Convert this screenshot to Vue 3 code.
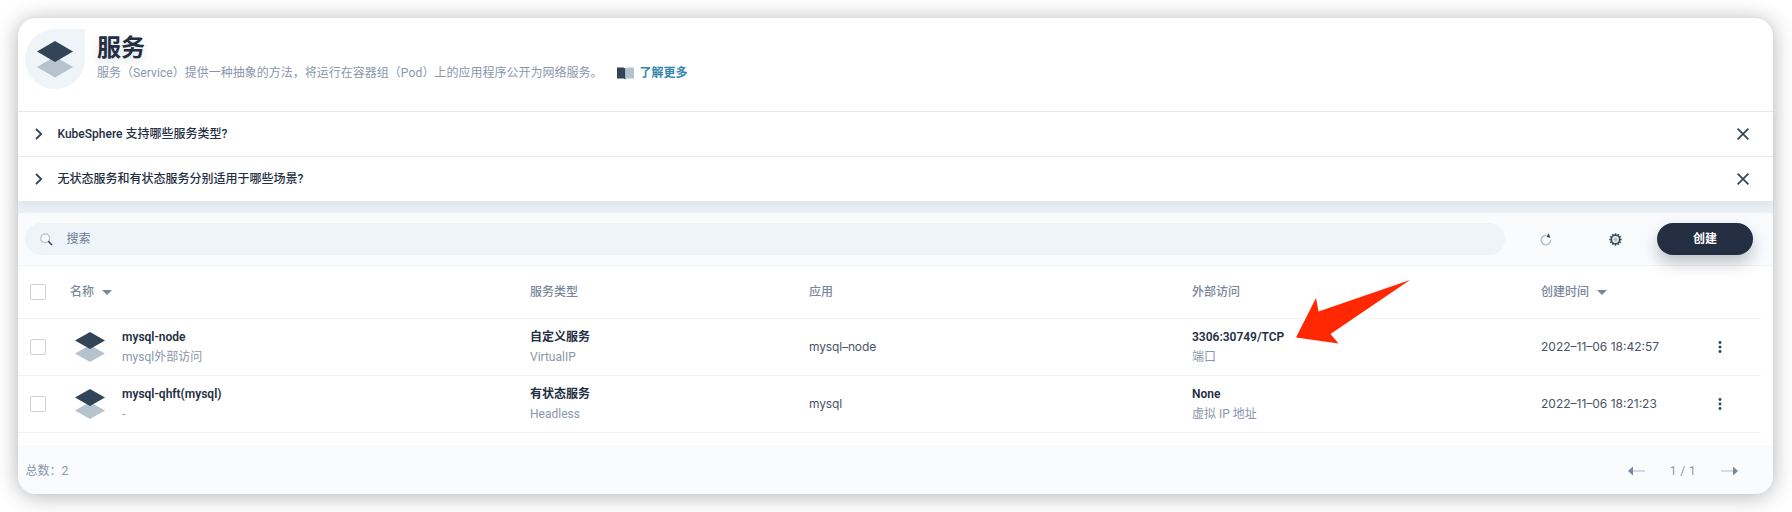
<script setup>
const tips = ['KubeSphere 支持哪些服务类型?', '无状态服务和有状态服务分别适用于哪些场景?']
const rows = [
  { name: 'mysql-node', note: 'mysql外部访问', type: '自定义服务', kind: 'VirtualIP', app: 'mysql–node', access: '3306:30749/TCP', accessNote: '端口', time: '2022–11–06 18:42:57' },
  { name: 'mysql-qhft(mysql)', note: '-', type: '有状态服务', kind: 'Headless', app: 'mysql', access: 'None', accessNote: '虚拟 IP 地址', time: '2022–11–06 18:21:23' },
]
const teeth = Array.from({ length: 12 }, (_, i) => i * 30)
</script>

<template>
  <main class="stage">
    <section class="window">
      <header class="banner">
        <div class="badge">
          <svg width="36" height="37" viewBox="0 0 36 37">
            <path d="M18 15.500L36 26L18 36.500L0 26Z" fill="#b6c2cd" />
            <path d="M18 0L36 10.500L18 21L0 10.500Z" fill="#324558" />
          </svg>
        </div>
        <div class="intro">
          <h1>服务</h1>
          <p>
            <span>服务（<span class="svc">Service</span>）提供一种抽象的方法，将运行在容器组（<span class="pod">Pod</span>）上的应用程序公开为网络服务。</span>
            <svg class="book" width="17" height="13" viewBox="0 0 17 13">
              <path d="M0 .5H6.500L8.500 1.500V12.500L6.500 11.500H0Z" fill="#324558" />
              <path d="M17 .5H10.500L8.500 1.500V12.500L10.500 11.500H17Z" fill="#b6c2cd" />
            </svg>
            <a>了解更多</a>
          </p>
        </div>
      </header>

      <div class="tips">
        <div v-for="tip in tips" :key="tip" class="tip">
          <svg width="8" height="12" viewBox="0 0 8 12"><path d="M1 1L6.200 6L1 11" fill="none" stroke="#324558" stroke-width="1.800" /></svg>
          <strong>{{ tip }}</strong>
          <svg width="12" height="12" viewBox="0 0 12 12"><path d="M.6 .6L11.400 11.400M11.400 .6L.6 11.400" stroke="#324558" stroke-width="1.700" /></svg>
        </div>
      </div>

      <div class="panel">
        <div class="toolbar">
          <div class="search">
            <svg width="13" height="13" viewBox="0 0 13 13">
              <circle cx="5.200" cy="5.200" r="4.400" fill="#f7f9fb" stroke="#b6c2cd" stroke-width="1.200" />
              <path d="M8.300 8.300L12 12" stroke="#324558" stroke-width="1.600" />
            </svg>
            <span>搜索</span>
          </div>
          <svg class="refresh" width="12" height="13" viewBox="0 0 12 13">
            <path d="M6.700 2.500A4.700 4.700 0 1 0 10.600 6.600" fill="none" stroke="#b6c2cd" stroke-width="1.500" />
            <path d="M8.700 .2L10.300 4.800L6.600 4Z" fill="#324558" />
          </svg>
          <svg class="gear" width="13" height="13" viewBox="0 0 13 13">
            <g fill="#324558"><rect v-for="a in teeth" :key="a" x="5.750" y="0.300" width="1.500" height="2" :transform="`rotate(${a} 6.500 6.500)`" /></g>
            <circle cx="6.500" cy="6.500" r="4.200" fill="#f9fbfd" stroke="#324558" stroke-width="1.600" />
            <circle cx="6.500" cy="6.500" r="2.300" fill="#b6c2cd" />
          </svg>
          <button>创建</button>
        </div>

        <div class="table">
          <div class="row head">
            <i class="check"></i>
            <span>名称<b class="caret"></b></span>
            <span>服务类型</span>
            <span>应用</span>
            <span>外部访问</span>
            <span>创建时间<b class="caret"></b></span>
          </div>
          <div v-for="r in rows" :key="r.name" class="row">
            <i class="check"></i>
            <div class="name">
              <svg width="30" height="30" viewBox="0 0 30 30">
                <path d="M15 13L30 21.500L15 30L0 21.500Z" fill="#b6c2cd" />
                <path d="M15 0L30 8.500L15 17L0 8.500Z" fill="#324558" />
              </svg>
              <div class="pair"><strong>{{ r.name }}</strong><small>{{ r.note }}</small></div>
            </div>
            <div class="pair"><strong>{{ r.type }}</strong><small>{{ r.kind }}</small></div>
            <span class="plain app">{{ r.app }}</span>
            <div class="pair"><strong>{{ r.access }}</strong><small>{{ r.accessNote }}</small></div>
            <span class="plain time">{{ r.time }}</span>
            <svg class="more" width="4" height="12" viewBox="0 0 4 12" fill="#324558">
              <circle cx="2" cy="1.500" r="1.450" /><circle cx="2" cy="6" r="1.450" /><circle cx="2" cy="10.500" r="1.450" />
            </svg>
          </div>
        </div>

        <footer class="footer">
          <span class="total">总数：<em>2</em></span>
          <svg width="17" height="10" viewBox="0 0 17 10"><path d="M5 4.200H17V5.800H5Z" fill="#ccd3db" /><path d="M0 5L5 .5V9.500Z" fill="#79879c" /></svg>
          <span class="pages">1 / 1</span>
          <svg width="17" height="10" viewBox="0 0 17 10"><path d="M0 4.200H12V5.800H0Z" fill="#ccd3db" /><path d="M17 5L12 .5V9.500Z" fill="#79879c" /></svg>
        </footer>
      </div>
      <svg class="arrow" width="114" height="65" viewBox="0 0 114 65"><path d="M0 57.500L20 18L22.500 31.500L114 0L34.500 54L42.500 63.500Z" fill="#ff2802" /></svg>
    </section>
  </main>
</template>

<style>
body { margin: 0; background: #fff; }
</style>

<style scoped>
* { box-sizing: border-box; }
.stage { height: 512px; padding: 18px 19px 18px 18px; overflow: hidden; background: #fff; font: 12px/18px Roboto, "Noto Sans CJK SC", sans-serif; color: #79879c; }
.window { position: relative; height: 476px; display: flex; flex-direction: column; border-radius: 18px; background: #fff; box-shadow: 0 0 1px rgba(0,0,0,.08), 0 2px 22px rgba(0,0,0,.3); }
.banner { height: 93px; flex: none; display: flex; padding: 11px 7px 0; }
.badge { width: 60px; height: 60px; display: grid; place-items: center; background: #eff4f9; border-radius: 30px 0 30px 30px; }
.intro { padding-left: 12px; }
h1 { margin: 3px 0 0; font-size: 24px; line-height: 32px; font-weight: 600; color: #242e42; text-shadow: 0 4px 8px rgba(36,46,66,.15); }
p { margin: 0; display: flex; align-items: center; height: 18px; font-weight: 400; white-space: nowrap; color: #8a96ab; }
.svc { letter-spacing: .1px; }
.pod { letter-spacing: .2px; }
.book { margin-left: 14px; margin-right: 6px; }
a { color: #3385b0; font-weight: 600; }
.tips { flex: none; position: relative; z-index: 1; background: #fff; box-shadow: 0 4px 8px rgba(36,46,66,.06); border-radius: 0 0 4px 4px; }
.tip { height: 45px; border-top: 1px solid #e3e9ef; display: flex; align-items: center; padding: 0 24.500px 0 17px; }
.tip strong { flex: 1; margin-left: 14.500px; font-weight: 500; color: #242e42; }
strong { font-weight: 600; color: #242e42; }
.panel { flex: 1; padding-top: 12px; display: flex; flex-direction: column; background: #eaf0f5; border-radius: 0 0 18px 18px; }
.toolbar { position: relative; height: 53px; flex: none; padding: 0 20px 0 7px; display: flex; align-items: center; background: #f9fbfd; border-bottom: 1px solid #eff4f9; border-radius: 4px 4px 0 0; }
.search { width: 1480px; height: 32px; border-radius: 16px; background: #eff4f9; display: flex; align-items: center; padding-left: 14.500px; gap: 14px; font-weight: 400; color: #6b7b95; }
.refresh { margin-left: 35px; }
.gear { margin-left: 57.500px; margin-right: 35px; }
button { width: 96px; height: 32px; margin-left: auto; border: 0; border-radius: 16px; background: #242e42; color: #fff; font: 600 12px/20px Roboto, "Noto Sans CJK SC", sans-serif; box-shadow: 0 8px 16px rgba(35,45,65,.28); }
.table { flex: none; height: 179px; background: #fff; padding-right: 12px; }
.row { height: 57px; display: grid; grid-template-columns: 52px 460px 279px 383px 349px 176.500px 1fr; align-items: center; border-bottom: 1px solid #eff4f9; }
.row.head { height: 53px; font-weight: 500; color: #79879c; }
.check { width: 16px; height: 16px; margin-left: 12px; border: 1px solid #ccd3db; border-radius: 2px; background: #fff; }
.caret { display: inline-block; margin-left: 8px; border: 4.500px solid transparent; border-width: 5px 4.500px 0; border-top-color: #79879c; vertical-align: 1px; }
.name { display: flex; align-items: center; padding-left: 5px; gap: 17px; }
.pair { display: flex; flex-direction: column; gap: 2px; }
.pair strong, .pair small { display: block; font-size: 12px; line-height: 18px; white-space: nowrap; }
.pair small { font-weight: 400; color: #8a96ab; }
.plain { font-family: Inter, sans-serif; color: #4a5366; white-space: nowrap; }
.app { letter-spacing: -.13px; }
.caret { border-left-width: 5px; border-right-width: 5px; }
.footer { flex: 1; display: flex; align-items: center; padding: 2px 35px 0 7.500px; background: #f9fbfd; border-radius: 0 0 18px 18px; font-weight: 400; color: #8a96ab; }
.total { margin-right: auto; }
.total em { font-style: normal; letter-spacing: .2px; }
.pages { width: 76px; text-align: center; letter-spacing: .4px; }
.arrow { position: absolute; left: 1277.500px; top: 262px; }
</style>
